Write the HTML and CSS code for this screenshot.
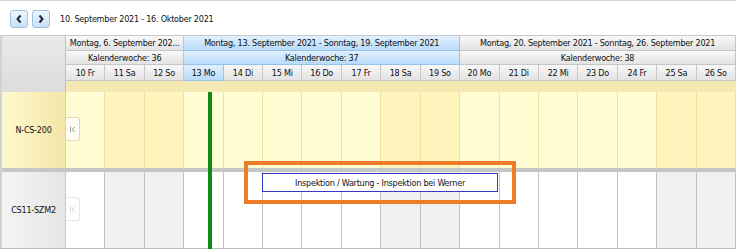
FILE: index.html
```html
<!DOCTYPE html>
<html>
<head>
  <link rel="stylesheet" href="styles.css">
</head>
<body>
  <div class="toolbar">
    <button class="nav"><svg width="8" height="10" viewBox="0 0 8 10"><polyline points="5.5,1.5 2.5,5 5.5,8.5" fill="none" stroke="#1b2740" stroke-width="2"/></svg></button>
    <button class="nav"><svg width="8" height="10" viewBox="0 0 8 10"><polyline points="2.5,1.5 5.5,5 2.5,8.5" fill="none" stroke="#1b2740" stroke-width="2"/></svg></button>
    <span class="range">10. September 2021 - 16. Oktober 2021</span>
  </div>

  <div class="grid">
    <div class="corner"></div>

    <div class="hc w3">Montag, 6. September 202...</div>
    <div class="hc w7 sel">Montag, 13. September 2021 - Sonntag, 19. September 2021</div>
    <div class="hc w7">Montag, 20. September 2021 - Sonntag, 26. September 2021</div>

    <div class="hc w3">Kalenderwoche: 36</div>
    <div class="hc w7 sel">Kalenderwoche: 37</div>
    <div class="hc w7">Kalenderwoche: 38</div>

    <div class="hc">10 Fr</div>
    <div class="hc">11 Sa</div>
    <div class="hc">12 So</div>
    <div class="hc sel">13 Mo</div>
    <div class="hc">14 Di</div>
    <div class="hc">15 Mi</div>
    <div class="hc">16 Do</div>
    <div class="hc">17 Fr</div>
    <div class="hc">18 Sa</div>
    <div class="hc">19 So</div>
    <div class="hc">20 Mo</div>
    <div class="hc">21 Di</div>
    <div class="hc">22 Mi</div>
    <div class="hc">23 Do</div>
    <div class="hc">24 Fr</div>
    <div class="hc">25 Sa</div>
    <div class="hc">26 So</div>

    <div class="strip"></div>

    <div class="res res-active">N-CS-200</div>
    <div class="cell y"><span class="collapse"><svg width="6" height="7" viewBox="0 0 6 7"><path d="M0.5 0.5v6M5 1L2 3.5L5 6" fill="none" stroke="#9a9a9a" stroke-width="1"/></svg></span></div>
    <div class="cell y we"></div>
    <div class="cell y we"></div>
    <div class="cell y"></div>
    <div class="cell y"></div>
    <div class="cell y"></div>
    <div class="cell y"></div>
    <div class="cell y"></div>
    <div class="cell y we"></div>
    <div class="cell y we"></div>
    <div class="cell y"></div>
    <div class="cell y"></div>
    <div class="cell y"></div>
    <div class="cell y"></div>
    <div class="cell y"></div>
    <div class="cell y we"></div>
    <div class="cell y we"></div>

    <div class="sep"></div>

    <div class="res">CS11-SZM2</div>
    <div class="cell"><span class="collapse faded"><svg width="6" height="7" viewBox="0 0 6 7"><path d="M0.5 0.5v6M5 1L2 3.5L5 6" fill="none" stroke="#d4d4d4" stroke-width="1"/></svg></span></div>
    <div class="cell we"></div>
    <div class="cell we"></div>
    <div class="cell"></div>
    <div class="cell"></div>
    <div class="cell"></div>
    <div class="cell"></div>
    <div class="cell"></div>
    <div class="cell we"></div>
    <div class="cell we"></div>
    <div class="cell"></div>
    <div class="cell"></div>
    <div class="cell"></div>
    <div class="cell"></div>
    <div class="cell"></div>
    <div class="cell we"></div>
    <div class="cell we"></div>

    <div class="now"></div>
    <div class="event">Inspektion / Wartung - Inspektion bei Werner</div>
    <div class="mark"></div>
  </div>
</body>
</html>
```

FILE: styles.css
```css
body {
  margin: 0;
  padding: 0;
  background: white;
  font-family: "DejaVu Sans Condensed", "DejaVu Sans", sans-serif;
  font-size: 9px;
  letter-spacing: -0.25px;
  color: #111;
  border-top: 1px solid #c9d3df;
}

.toolbar {
  height: 34px;
  display: flex;
  align-items: center;
  padding-left: 10px;
  box-sizing: border-box;
  padding-top: 2px;
}

.nav {
  width: 18px;
  height: 18px;
  margin: 0 4px 0 0;
  padding: 0;
  border: 1px solid #9cc3e6;
  border-radius: 3px;
  background: linear-gradient(#f0f7fe, #c6e0f8);
  display: flex;
  align-items: center;
  justify-content: center;
}

.range {
  margin-left: 6px;
}

.grid {
  position: relative;
  display: grid;
  grid-template-columns: 64px repeat(17, 1fr);
  grid-template-rows: 15px 14px 16px 11px 76px 4px 76px;
  border-left: 2px solid #d2d2d2;
  border-top: 1px solid #c8c8c8;
  border-bottom: 1px solid #bdbdbd;
}

.corner {
  grid-row: 1 / 5;
  background: linear-gradient(#e9e9e9, #dcdcdc);
  border-right: 1px solid #c2c2c2;
}

.hc {
  display: flex;
  align-items: center;
  justify-content: center;
  white-space: nowrap;
  overflow: hidden;
  background: linear-gradient(#f8f8f8, #e3e3e3);
  border-right: 1px solid #c6c6c6;
  border-bottom: 1px solid #c6c6c6;
}

.hc.sel {
  background: linear-gradient(#e2f0fd, #b8dbfa);
  border-color: #93c2ea;
}

.w3 {
  grid-column: span 3;
}

.w7 {
  grid-column: span 7;
}

.strip {
  grid-column: 2 / -1;
  background: #f5e9b3;
}

.res {
  display: flex;
  align-items: center;
  justify-content: center;
  background: linear-gradient(90deg, #f5f5f5, #e5e5e5);
  border-right: 1px solid #c9c9c9;
}

.res-active {
  background: linear-gradient(90deg, #fff9cf, #f4e6a6);
  border-right-color: #e3d594;
}

.cell {
  position: relative;
  background: white;
  border-right: 1px solid #c2c2c2;
}

.cell.we {
  background: #f0f0f0;
}

.cell.y {
  background: #fffdd3;
  border-right-color: #f1e0a6;
}

.cell.y.we {
  background: #fff4bc;
}

.collapse {
  position: absolute;
  left: 0;
  top: 25px;
  width: 14px;
  height: 24px;
  box-sizing: border-box;
  border: 1px solid #e2d7ad;
  border-left: none;
  border-radius: 0 3px 3px 0;
  background: #fffef4;
  display: flex;
  align-items: center;
  justify-content: center;
}

.collapse.faded {
  background: white;
  border-color: #e6e6e6;
}

.sep {
  grid-column: 1 / -1;
  background: #c6c6c6;
}

.now {
  position: absolute;
  left: 206px;
  top: 56px;
  bottom: -2px;
  width: 4px;
  background: #138a13;
}

.event {
  position: absolute;
  left: 260px;
  top: 137px;
  width: 236px;
  height: 19px;
  box-sizing: border-box;
  border: 1px solid #3838c8;
  background: white;
  display: flex;
  align-items: center;
  justify-content: center;
}

.mark {
  position: absolute;
  left: 242px;
  top: 125px;
  width: 272px;
  height: 43px;
  box-sizing: border-box;
  border: 4px solid #ee7c28;
}
```
